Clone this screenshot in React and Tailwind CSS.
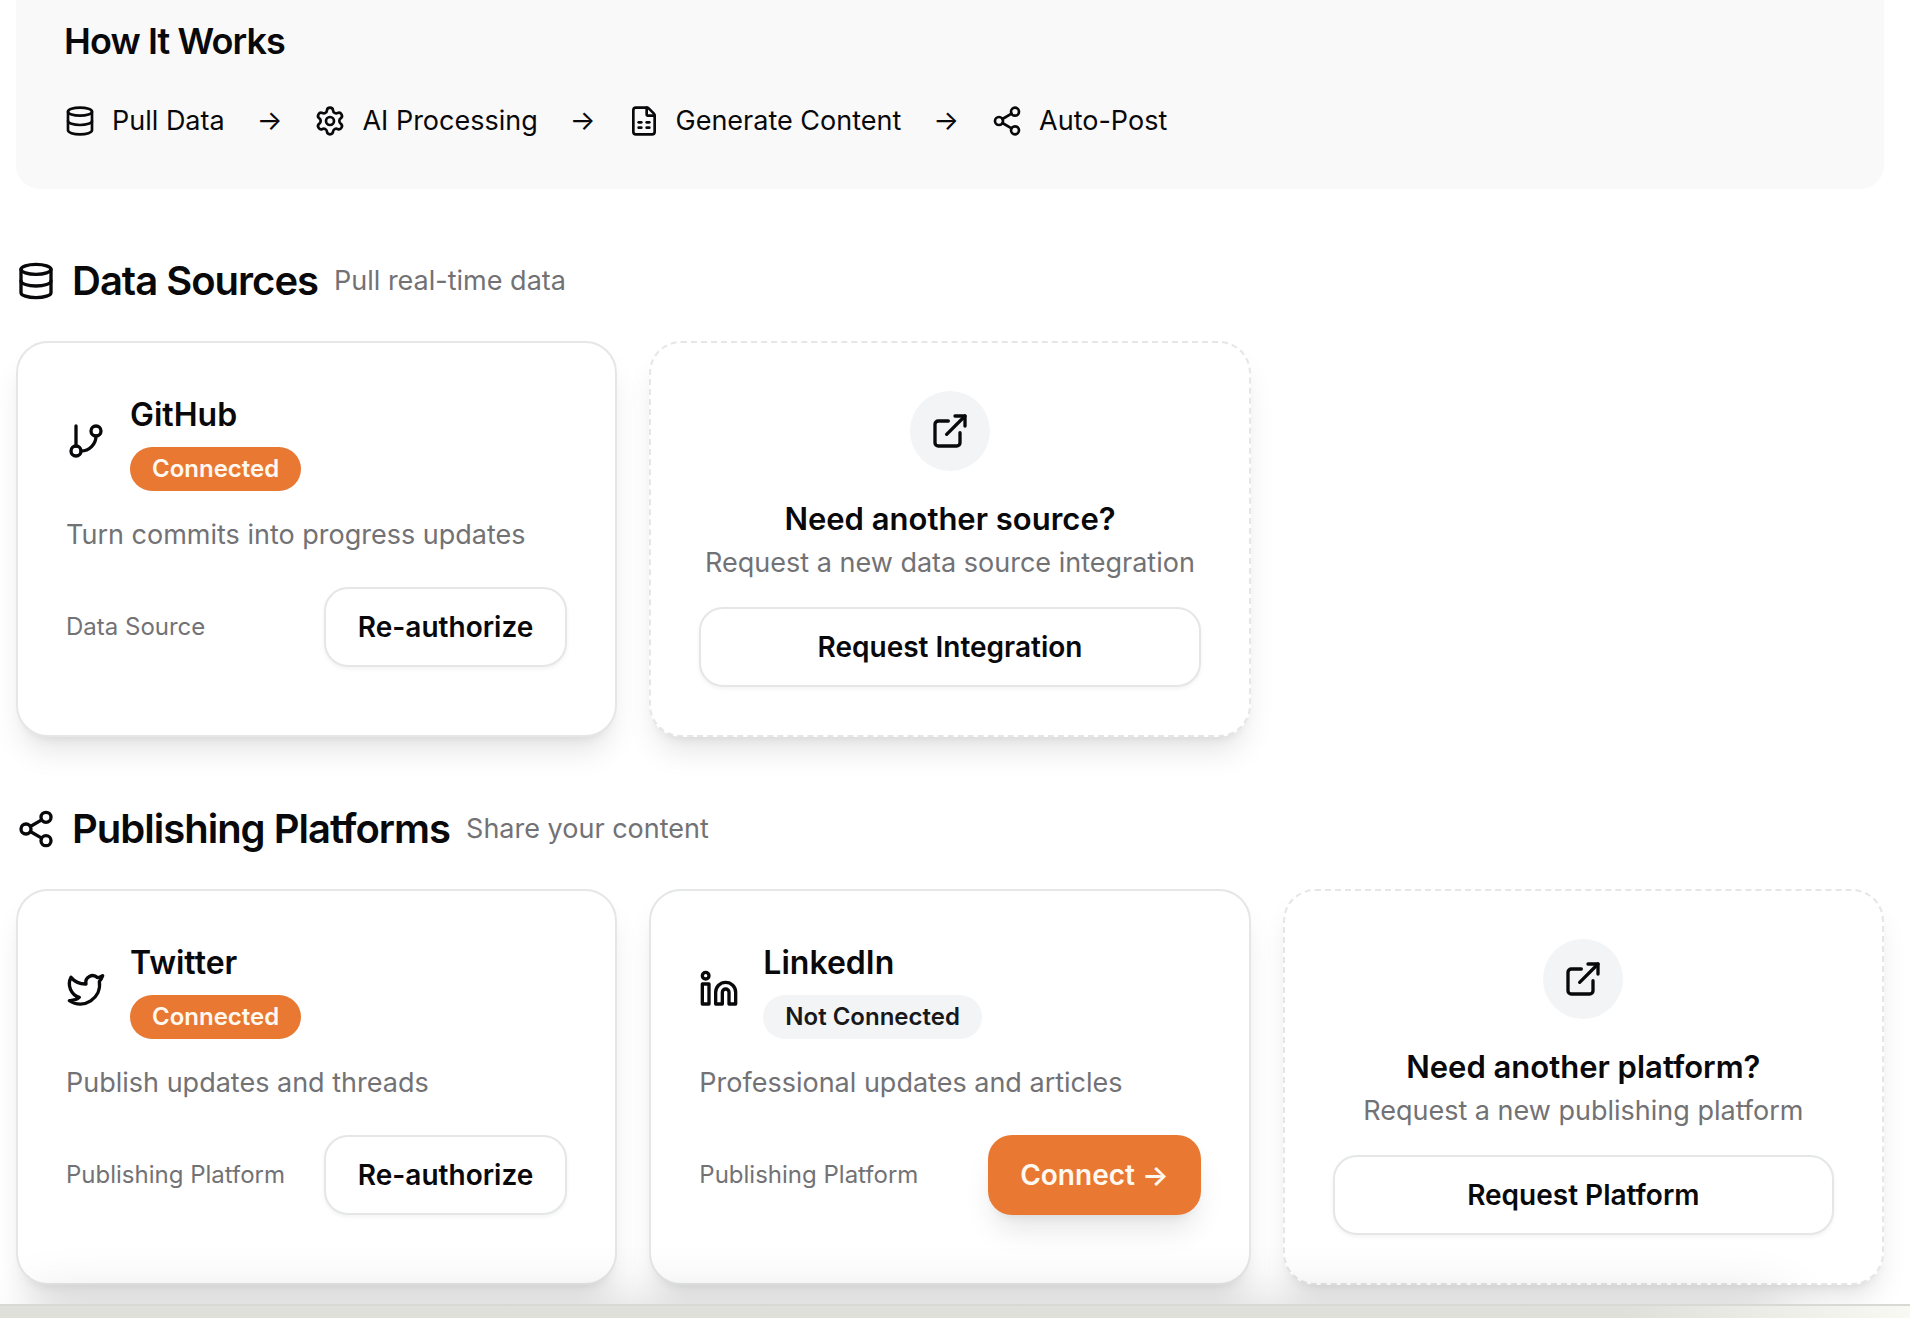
import React from "react";
import {
  Database,
  ExternalLink,
  FileSpreadsheet,
  GitBranch,
  Linkedin,
  Settings,
  Share2,
  Twitter,
} from "lucide-react";

const steps = [
  { icon: Database, label: "Pull Data" },
  { icon: Settings, label: "AI Processing" },
  { icon: FileSpreadsheet, label: "Generate Content" },
  { icon: Share2, label: "Auto-Post" },
];

const cardBase =
  "rounded-[32px] border-2 border-[#e4e6e7] bg-white p-12 shadow-[0_20px_30px_-6px_rgba(0,0,0,0.1),0_8px_12px_-8px_rgba(0,0,0,0.1)]";

const outlineButton =
  "h-20 rounded-3xl border-2 border-[#e4e6e7] bg-white px-8 text-[28px] leading-10 font-semibold whitespace-nowrap shadow-[0_2px_4px_rgba(0,0,0,0.05)]";

function Section({ icon: Icon, title, note, children }) {
  return (
    <section className="mt-16">
      <div className="flex items-center gap-4">
        <Icon className="size-10 shrink-0" />
        <h2 className="text-[40px] leading-14 font-semibold tracking-tight">{title}</h2>
        <span className="text-[27px] leading-10 text-[#727275]">{note}</span>
      </div>
      <div className="mt-8 grid grid-cols-3 gap-8">{children}</div>
    </section>
  );
}

function IntegrationCard({ icon: Icon, name, connected, description, kind }) {
  return (
    <article className={cardBase}>
      <div className="flex items-center gap-6">
        <Icon className="size-10 shrink-0" />
        <div className="flex flex-col items-start gap-2">
          <h3 className="text-[32px] leading-12 font-semibold">{name}</h3>
          <span
            className={
              connected
                ? "rounded-full bg-[#e87832] px-[22px] text-2xl leading-11 font-semibold text-[#fff8f0]"
                : "rounded-full bg-[#f3f4f6] px-[22px] text-2xl leading-11 font-semibold text-[#18181b]"
            }
          >
            {connected ? "Connected" : "Not Connected"}
          </span>
        </div>
      </div>
      <p className="mt-6 text-[27px] leading-10 text-[#727275]">{description}</p>
      <div className="mt-8 flex items-center justify-between">
        <span className="text-2xl text-[#727275]">{kind}</span>
        {connected ? (
          <button type="button" className={outlineButton}>
            Re-authorize
          </button>
        ) : (
          <button
            type="button"
            className="h-20 rounded-3xl bg-[#e87832] px-8 text-[28px] leading-10 font-semibold whitespace-nowrap text-[#fff8f0] shadow-[0_20px_30px_-6px_rgba(0,0,0,0.1),0_8px_12px_-8px_rgba(0,0,0,0.1)]"
          >
            Connect →
          </button>
        )}
      </div>
    </article>
  );
}

function RequestCard({ title, description, action }) {
  return (
    <article className={`${cardBase} flex flex-col items-center border-dashed text-center`}>
      <div className="flex size-20 items-center justify-center rounded-full bg-[#f3f4f6]">
        <ExternalLink className="size-10" />
      </div>
      <h3 className="mt-6 text-[31px] leading-12 font-semibold">{title}</h3>
      <p className="text-[27px] leading-10 whitespace-nowrap text-[#727275]">{description}</p>
      <button type="button" className={`${outlineButton} mt-6 w-full`}>
        {action}
      </button>
    </article>
  );
}

export default function App() {
  return (
    <div className="overflow-hidden bg-white font-['Inter',sans-serif] text-[#09090b]">
      <main className="pr-[26px] pb-[19px] pl-4">
        <section className="rounded-b-3xl bg-[#f9f9f9] px-12 pt-[13px] pb-12">
          <h2 className="text-4xl leading-14 font-semibold tracking-tight">How It Works</h2>
          <ol className="mt-8 flex items-center gap-8">
            {steps.map(({ icon: Icon, label }, i) => (
              <React.Fragment key={label}>
                {i > 0 && (
                  <li aria-hidden="true" className="text-[27px] leading-10">
                    →
                  </li>
                )}
                <li className="flex items-center gap-4">
                  <Icon className="size-8" />
                  <span className="text-[27px] leading-10">{label}</span>
                </li>
              </React.Fragment>
            ))}
          </ol>
        </section>

        <Section icon={Database} title="Data Sources" note="Pull real-time data">
          <IntegrationCard
            icon={GitBranch}
            name="GitHub"
            connected
            description="Turn commits into progress updates"
            kind="Data Source"
          />
          <RequestCard
            title="Need another source?"
            description="Request a new data source integration"
            action="Request Integration"
          />
        </Section>

        <Section icon={Share2} title="Publishing Platforms" note="Share your content">
          <IntegrationCard
            icon={Twitter}
            name="Twitter"
            connected
            description="Publish updates and threads"
            kind="Publishing Platform"
          />
          <IntegrationCard
            icon={Linkedin}
            name="LinkedIn"
            description="Professional updates and articles"
            kind="Publishing Platform"
          />
          <RequestCard
            title="Need another platform?"
            description="Request a new publishing platform"
            action="Request Platform"
          />
        </Section>
      </main>
      <footer className="relative">
        {/* Soft shade that rises over the cards above the bar */}
        <div className="absolute top-0 right-32 left-8 h-40 shadow-[0_0_60px_rgba(0,0,0,0.16)]" />
        <div className="relative h-[14px] border-t-2 border-[#d8d9d5] bg-linear-to-r from-[#dfe0da] from-85% to-[#f8f9f2]" />
      </footer>
    </div>
  );
}
